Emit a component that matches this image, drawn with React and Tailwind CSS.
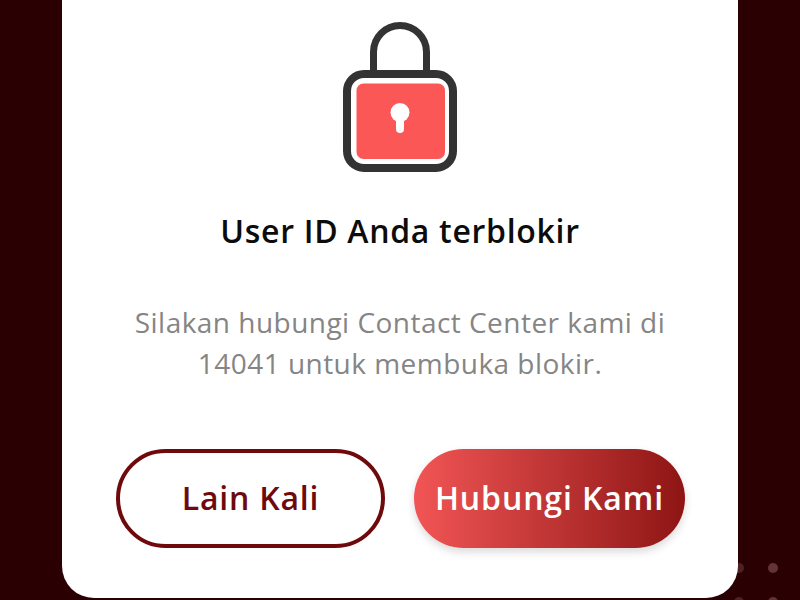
export default function App() {
  return (
    <div className="w-[800px] h-[600px] overflow-hidden bg-[#2b0002] relative font-['Open_Sans','Noto_Sans',sans-serif]">
      {/* background dots */}
      <span className="absolute left-[734px] top-[563px] w-[10px] h-[10px] rounded-full bg-[#502022]" />
      <span className="absolute left-[768px] top-[563px] w-[10px] h-[10px] rounded-full bg-[#633335]" />
      <span className="absolute left-[734px] top-[597px] w-[10px] h-[10px] rounded-full bg-[#502022]" />
      <span className="absolute left-[768px] top-[597px] w-[10px] h-[10px] rounded-full bg-[#633335]" />

      <div className="relative mx-auto w-[676px] h-[598px] bg-white rounded-b-[32px] flex flex-col items-center">
        <LockIcon />
        <h1 className="mt-[37px] text-[32px] leading-[42px] font-semibold tracking-[0.7px] text-[#0c0c0c]">
          User ID Anda terblokir
        </h1>
        <p className="mt-[50px] text-[28px] leading-[41px] tracking-[0.47px] text-center text-[#858585]">
          Silakan hubungi Contact Center kami di
          <br />
          14041 untuk membuka blokir.
        </p>
        <div className="mt-[65px] flex gap-[29px] ml-[1px]">
          <button className="w-[269px] h-[99px] pb-[2px] rounded-full border-4 border-[#6f0a0c] bg-white text-[32px] font-semibold tracking-[0.8px] text-[#6f0a0c]">
            Lain Kali
          </button>
          <button className="w-[271px] h-[99px] pb-[2px] rounded-full bg-gradient-to-r from-[#f25555] to-[#8e1414] shadow-[0_4px_8px_rgba(0,0,0,0.15)] text-[32px] font-semibold tracking-[0.9px] text-white">
            Hubungi Kami
          </button>
        </div>
      </div>
    </div>
  );
}

function LockIcon() {
  return (
    <svg width="116" height="152" viewBox="0 0 116 152" className="mt-[21px] shrink-0">
      <path d="M31.5 52V31a26.5 26.5 0 0 1 53 0v21" fill="none" stroke="#333333" strokeWidth="7" />
      <rect x="5" y="53" width="106" height="94" rx="17" fill="#fff" stroke="#333333" strokeWidth="8" />
      <rect x="14.5" y="62.5" width="88.5" height="75.5" rx="7" fill="#fb5757" />
      <circle cx="58" cy="91.5" r="9.5" fill="#fff" />
      <path d="M58 95v13" stroke="#fff" strokeWidth="8" strokeLinecap="round" />
    </svg>
  );
}
